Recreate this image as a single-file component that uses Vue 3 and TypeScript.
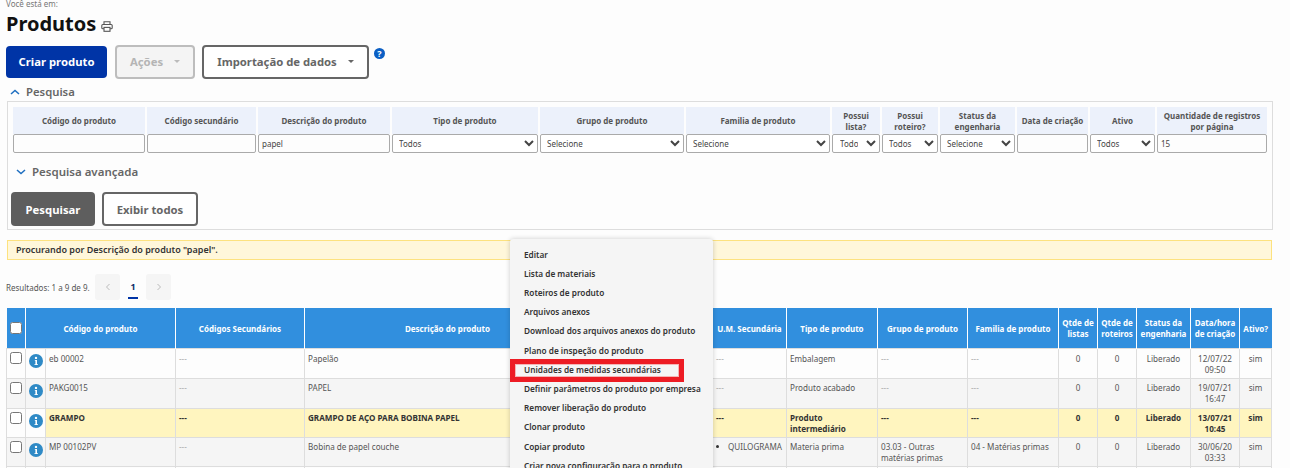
<script setup lang="ts">
const filters = [
  { label: 'Código do produto', type: 'input', value: '' },
  { label: 'Código secundário', type: 'input', value: '' },
  { label: 'Descrição do produto', type: 'input', value: 'papel' },
  { label: 'Tipo de produto', type: 'select', value: 'Todos' },
  { label: 'Grupo de produto', type: 'select', value: 'Selecione' },
  { label: 'Familia de produto', type: 'select', value: 'Selecione' },
  { label: 'Possui lista?', type: 'select', value: 'Todos', narrow: true },
  { label: 'Possui roteiro?', type: 'select', value: 'Todos' },
  { label: 'Status da engenharia', type: 'select', value: 'Selecione' },
  { label: 'Data de criação', type: 'input', value: '' },
  { label: 'Ativo', type: 'select', value: 'Todos' },
  { label: 'Quantidade de registros por página', type: 'input', value: '15' },
]
const colWidths = [19, 20, 130, 129, 286, 122, 74, 91, 90, 91, 39, 39, 54, 49, 32]
const headers = [
  { t: 'Código do produto', span: 2 },
  { t: 'Códigos Secundários', span: 1 },
  { t: 'Descrição do produto', span: 1 },
  { t: '', span: 1 },
  { t: 'U.M. Secundária', span: 1 },
  { t: 'Tipo de produto', span: 1 },
  { t: 'Grupo de produto', span: 1 },
  { t: 'Familia de produto', span: 1 },
  { t: 'Qtde de listas', span: 1 },
  { t: 'Qtde de roteiros', span: 1 },
  { t: 'Status da engenharia', span: 1 },
  { t: 'Data/hora de criação', span: 1 },
  { t: 'Ativo?', span: 1 },
]
const rows = [
  { cls: 'odd r1', code: 'eb 00002', sec: '---', desc: 'Papelão', ums: '---', tipo: 'Embalagem', grupo: '---', fam: '---', date: '12/07/22 09:50' },
  { cls: 'even r2', code: 'PAKG0015', sec: '---', desc: 'PAPEL', ums: '---', tipo: 'Produto acabado', grupo: '---', fam: '---', date: '19/07/21 16:47' },
  { cls: 'hl', code: 'GRAMPO', sec: '---', desc: 'GRAMPO DE AÇO PARA BOBINA PAPEL', ums: '---', tipo: 'Produto intermediário', grupo: '---', fam: '---', date: '13/07/21 10:45' },
  { cls: 'even', code: 'MP 00102PV', sec: '---', desc: 'Bobina de papel couche', ums: 'QUILOGRAMA', tipo: 'Materia prima', grupo: '03.03 - Outras matérias primas', fam: '04 - Matérias primas', date: '30/06/20 03:33' },
]
const menu = [
  'Editar',
  'Lista de materiais',
  'Roteiros de produto',
  'Arquivos anexos',
  'Download dos arquivos anexos do produto',
  'Plano de inspeção do produto',
  'Unidades de medidas secundárias',
  'Definir parâmetros do produto por empresa',
  'Remover liberação do produto',
  'Clonar produto',
  'Copiar produto',
  'Criar nova configuração para o produto',
]
</script>

<template>
  <div class="page">
    <div class="crumb">Você está em:</div>
    <div class="title-row">
      <h1>Produtos</h1>
      <svg class="printer" width="12" height="11" viewBox="0 0 12 11" fill="none" stroke="#555" stroke-width="1.1">
        <path d="M3 3.5V.8h6v2.7" />
        <rect x=".8" y="3.5" width="10.4" height="4.2" rx="1" />
        <rect x="3" y="6.4" width="6" height="3.9" fill="#fdfdfd" />
      </svg>
    </div>

    <div class="actions">
      <button class="btn primary">Criar produto</button>
      <button class="btn disabled">Ações<span class="caret"></span></button>
      <button class="btn outline import">Importação de dados<span class="caret dark"></span></button>
      <span class="help">?</span>
    </div>

    <div class="section-head first">
      <svg width="10" height="6" viewBox="0 0 10 6" fill="none" stroke="#1f6fc0" stroke-width="1.5"><path d="M1 5l4-3.6L9 5" /></svg>
      <span>Pesquisa</span>
    </div>

    <section class="panel">
      <div class="filters">
        <div v-for="f in filters" :key="f.label" class="filter">
          <div class="f-label"><span>{{ f.label }}</span></div>
          <input v-if="f.type === 'input'" class="control" type="text" :value="f.value" />
          <select v-else class="control sel" :class="{ narrow: f.narrow }"><option>{{ f.value }}</option></select>
        </div>
      </div>
      <div class="section-head adv">
        <svg width="10" height="6" viewBox="0 0 10 6" fill="none" stroke="#1f6fc0" stroke-width="1.5"><path d="M1 1l4 3.6L9 1" /></svg>
        <span>Pesquisa avançada</span>
      </div>
      <div class="panel-actions">
        <button class="btn dark-btn">Pesquisar</button>
        <button class="btn outline">Exibir todos</button>
      </div>
    </section>

    <div class="notice">Procurando por Descrição do produto "papel".</div>

    <div class="pager">
      <span class="results">Resultados: 1 a 9 de 9.</span>
      <span class="pg-btn">
        <svg width="6" height="8" viewBox="0 0 6 8" fill="none" stroke="#bbb" stroke-width="1"><path d="M4.5 1L1.5 4l3 3" /></svg>
      </span>
      <span class="pg-num">1</span>
      <span class="pg-btn">
        <svg width="6" height="8" viewBox="0 0 6 8" fill="none" stroke="#bbb" stroke-width="1"><path d="M1.5 1l3 3-3 3" /></svg>
      </span>
    </div>

    <table class="grid">
      <colgroup>
        <col v-for="(w, i) in colWidths" :key="i" :style="{ width: w + 'px' }" />
      </colgroup>
      <thead>
        <tr>
          <th class="chk-h"><input type="checkbox" class="chk" /></th>
          <th v-for="(h, i) in headers" :key="i" :colspan="h.span">{{ h.t }}</th>
        </tr>
      </thead>
      <tbody>
        <tr v-for="r in rows" :key="r.code" :class="r.cls">
          <td class="fix"><input type="checkbox" class="chk" /></td>
          <td class="fix info-cell">
            <svg width="14" height="14" viewBox="0 0 14 14">
              <circle cx="7" cy="7" r="7" fill="#2f8ac6" />
              <circle cx="7" cy="3.9" r="1.2" fill="#fff" />
              <path d="M5.8 6h2.2v4.2H9v.8H5.4v-.8h1V6.8h-.6z" fill="#fff" />
            </svg>
          </td>
          <td>{{ r.code }}</td>
          <td class="muted">{{ r.sec }}</td>
          <td>{{ r.desc }}</td>
          <td></td>
          <td class="ums">
            <span v-if="r.ums !== '---'" class="bullet"><i class="dot"></i>{{ r.ums }}</span>
            <span v-else class="muted">---</span>
          </td>
          <td>{{ r.tipo }}</td>
          <td :class="{ muted: r.grupo === '---' }">{{ r.grupo }}</td>
          <td :class="{ muted: r.fam === '---' }">{{ r.fam }}</td>
          <td class="c">0</td>
          <td class="c">0</td>
          <td class="c">Liberado</td>
          <td class="c">{{ r.date }}</td>
          <td class="c">sim</td>
        </tr>
        <tr class="odd">
          <td class="fix"></td>
          <td class="fix"></td>
          <td v-for="n in 13" :key="n"></td>
        </tr>
      </tbody>
    </table>

    <div class="menu">
      <div v-for="(m, i) in menu" :key="m" class="menu-item" :class="{ gap: i === 5 || i === 10 }">{{ m }}</div>
    </div>
    <div class="marker"></div>
  </div>
</template>

<style>
html, body { margin: 0; background: #fdfdfd; }
</style>

<style scoped>
.page {
  position: relative;
  width: 1290px;
  height: 468px;
  overflow: hidden;
  box-sizing: border-box;
  padding: 0 18px 0 7px;
  background: #fdfdfd;
  font-family: "Noto Sans", "Open Sans", sans-serif;
  color: #333;
}
.crumb {
  height: 10px;
  margin-left: -1px;
  margin-top: -1px;
  font-size: 8px;
  line-height: 10px;
  color: #777;
}
.title-row {
  display: flex;
  align-items: center;
  height: 29px;
  margin-left: -1px;
}
h1 {
  margin: 0;
  font-size: 20px;
  line-height: 26px;
  font-weight: 700;
  color: #111;
}
.printer { margin: 6px 0 0 5px; }
.actions {
  display: flex;
  align-items: center;
  margin-top: 7px;
  margin-left: -1px;
  height: 34px;
}
.actions .btn { padding-bottom: 2px; }
.btn {
  box-sizing: border-box;
  font-family: inherit;
  font-weight: 700;
  font-size: 11.3px;
  border-radius: 4px;
  border: 2px solid transparent;
  padding: 0;
  display: inline-flex;
  align-items: center;
  justify-content: center;
}
.primary { width: 101px; height: 32px; background: #0034a6; color: #fff; }
.disabled {
  width: 80px; height: 34px; margin-left: 8px;
  background: #f4f4f4; border-color: #bdbdbd; color: #b5b5b5;
}
.outline { background: #fff; border-color: #666; color: #666; }
.import { width: 167px; height: 34px; margin-left: 7px; }
.caret {
  width: 0; height: 0; margin-left: 11px; margin-top: 1px;
  border-left: 3px solid transparent;
  border-right: 3px solid transparent;
  border-top: 3px solid #bbb;
}
.caret.dark { border-top-color: #666; }
.help {
  width: 11px; height: 11px; margin: -17px 0 0 5px;
  border-radius: 50%;
  background: #0b5fc4;
  color: #fff;
  font-size: 9px;
  font-weight: 700;
  line-height: 11px;
  text-align: center;
}
.section-head {
  display: flex;
  align-items: center;
  font-size: 11.3px;
  font-weight: 600;
  color: #666;
  line-height: 14px;
}
.section-head.first { margin-top: 6px; margin-left: 3px; height: 14px; }
.section-head.first span { margin-left: 6px; }
.panel {
  box-sizing: border-box;
  margin-top: 2px;
  height: 129px;
  width: 1266px;
  border: 1px solid #ddd;
  padding: 5px 5px 0;
}
.filters {
  display: grid;
  grid-template-columns: 132px 109px 132px 146px 144px 144px 48px 56px 75px 71px 65px 110px;
  column-gap: 2px;
}
.filter { display: flex; flex-direction: column; min-width: 0; }
.f-label {
  height: 27px;
  background: #ecf1fb;
  display: flex;
  align-items: center;
  justify-content: center;
  text-align: center;
  font-size: 8px;
  line-height: 11px;
  font-weight: 700;
  color: #555;
}
.control {
  box-sizing: border-box;
  height: 19px;
  width: 100%;
  border: 1px solid #aaa;
  border-radius: 2px;
  background: #fdfdfd;
  font-family: inherit;
  font-size: 8px;
  color: #444;
  padding: 0 3px;
  outline: none;
}
.sel { background: #fff; padding: 0 2px; }
.sel.narrow { padding: 0 5px 0 3px; }
.adv { margin: 11px 0 0 3px; height: 16px; font-size: 11.5px; }
.adv span { margin-left: 6px; }
.panel-actions { display: flex; gap: 7px; margin-top: 12px; margin-left: -2px; }
.panel-actions .btn { height: 34px; }
.dark-btn { width: 84px; background: #5e5e5e; color: #fff; }
.panel-actions .outline { width: 96px; }
.notice {
  box-sizing: border-box;
  width: 1265px;
  height: 20px;
  margin-top: 10px;
  background: #fff7da;
  border: 1px solid #fde27f;
  padding-left: 8px;
  font-size: 9px;
  font-weight: 600;
  line-height: 18px;
  color: #333;
}
.pager {
  display: flex;
  align-items: center;
  height: 26px;
  margin-top: 14px;
  margin-left: -1px;
}
.results { width: 89px; font-size: 8px; color: #555; }
.pg-btn {
  width: 25px; height: 26px;
  background: #f5f5f5;
  border-radius: 3px;
  display: flex; align-items: center; justify-content: center;
}
.pg-num {
  position: relative;
  width: 26px;
  text-align: center;
  font-size: 9px;
  font-weight: 700;
  color: #0a2a66;
  line-height: 26px;
}
.pg-num::after {
  content: "";
  position: absolute;
  left: 8px; right: 8px; bottom: 1px;
  height: 2px;
  background: #0034a6;
}
.grid {
  margin-top: 8px;
  margin-left: -1px;
  table-layout: fixed;
  border-collapse: collapse;
  width: 1266px;
}
th {
  height: 40px;
  padding: 0 2px;
  background: #318fde;
  color: #fff;
  font-size: 8px;
  line-height: 11px;
  font-weight: 700;
  text-align: center;
  border-left: 1px solid #fff;
  border-right: 1px solid #fff;
}
th:first-child { border-left: none; }
th:last-child { border-right: none; }
.chk-h { padding: 0; }
td {
  box-sizing: border-box;
  height: 29px;
  padding: 3px 3px 0;
  vertical-align: top;
  font-size: 8.1px;
  line-height: 11px;
  color: #555;
  border: 1px solid #ddd;
}
tr.r1 td, tr.r2 td { height: 30px; }
tr.r1 td { padding-top: 4px; }
tr.odd td { background: #fdfdfd; }
tr.even td { background: #f5f5f5; }
tr.hl td { background: #fff5bf; font-weight: 700; color: #333; }
tr.hl td.fix { background: #fdfdfd; }
td.c { text-align: center; }
.muted { color: #aaa; }
tr.hl .muted, tr.hl td.muted { color: #333; }
tr td.fix { padding: 0; text-align: center; }
.chk { display: block; width: 12px; height: 12px; margin: 3px auto 0; }
.chk-h .chk { margin: 0 auto; }
.info-cell svg { display: block; margin: 5px auto 0; }
.bullet { display: flex; align-items: center; white-space: nowrap; }
.dot {
  width: 3px; height: 3px; border-radius: 50%;
  background: #333; margin: 0 9px 0 0; flex: none;
}
.menu {
  position: absolute;
  left: 510px;
  top: 239px;
  width: 203px;
  height: 260px;
  box-sizing: border-box;
  padding-top: 6px;
  background: #f5f5f5;
  border-radius: 3px;
  box-shadow: 0 0 5px rgba(0, 0, 0, .2);
}
.menu-item {
  height: 19px;
  line-height: 19px;
  padding-left: 14px;
  font-size: 8.25px;
  font-weight: 600;
  color: #333;
  white-space: nowrap;
}
.menu-item.gap { margin-top: 1px; }
.marker {
  position: absolute;
  left: 510px;
  top: 359px;
  width: 174px;
  height: 23px;
  box-sizing: border-box;
  border: 5px solid #ed1c24;
  box-shadow: inset 0 0 0 1px #f5b5b5;
}
</style>
